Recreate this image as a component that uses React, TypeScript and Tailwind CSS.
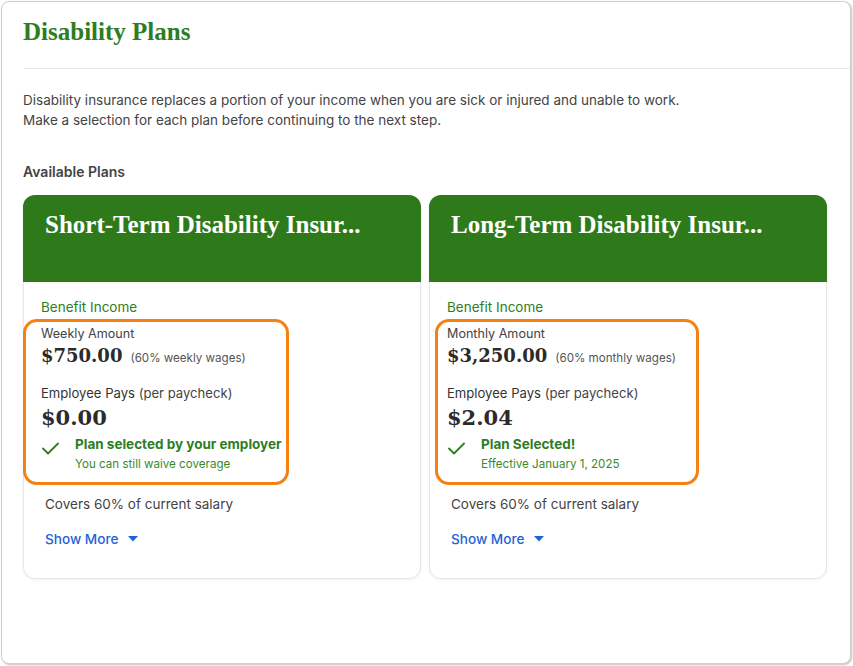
import React from 'react';

type Plan = {
  title: string;
  amountLabel: string;
  amount: string;
  wages: string;
  pays: string;
  status: string;
  note: string;
  boxClass: string;
};

const plans: Plan[] = [
  {
    title: 'Short-Term Disability Insur...',
    amountLabel: 'Weekly Amount',
    amount: '$750.00',
    wages: '(60% weekly wages)',
    pays: '$0.00',
    status: 'Plan selected by your employer',
    note: 'You can still waive coverage',
    boxClass: 'ml-[-1px] w-[266px] pl-[15px]',
  },
  {
    title: 'Long-Term Disability Insur...',
    amountLabel: 'Monthly Amount',
    amount: '$3,250.00',
    wages: '(60% monthly wages)',
    pays: '$2.04',
    status: 'Plan Selected!',
    note: 'Effective January 1, 2025',
    boxClass: 'ml-[5px] w-[264px] pl-[9px]',
  },
];

const serif = "font-['Liberation_Serif',serif]";
const money = "font-['DejaVu_Serif',serif]";

const Check = () => (
  <svg width="17" height="13" viewBox="0 0 17 13" fill="none" className="shrink-0 mt-[7px]">
    <path d="M1 6.5 L6 11.5 L16 1.5" stroke="#2e7d1f" strokeWidth="1.8" strokeLinecap="round" strokeLinejoin="round" />
  </svg>
);

const PlanCard: React.FC<{ plan: Plan }> = ({ plan }) => (
  <div className="w-[398px] h-[384px] rounded-xl border border-[#e6e6e6] shadow-[0_1px_3px_rgba(0,0,0,0.06)] bg-white flex flex-col">
    <div className="h-[87px] bg-[#2e7a1b] rounded-t-xl -mx-px -mt-px px-[22px] pt-[14px]">
      <h2 className={`${serif} text-[25px] leading-[32px] font-bold text-white whitespace-nowrap`}>
        {plan.title}
      </h2>
    </div>
    <div className="pt-[15px] pl-[17px] text-[13.5px] leading-[20px] text-[#2e7d1f]">Benefit Income</div>
    <div className={`${plan.boxClass} mt-[2px] border-[3px] border-[#f58113] rounded-[14px] pt-[3px] pb-[9px]`}>
      <div className="text-[12.6px] leading-[18px] text-[#444]">{plan.amountLabel}</div>
      <div className="flex items-baseline gap-[8px] h-[26px]">
        <span className={`${money} text-[18px] leading-[26px] font-bold text-[#2b2b2b]`}>{plan.amount}</span>
        <span className="text-[11.6px] text-[#555]">{plan.wages}</span>
      </div>
      <div className="mt-[14px] text-[13.1px] leading-[20px] text-[#333]">
        Employee Pays <span className="text-[#444]">(per paycheck)</span>
      </div>
      <div className={`${money} text-[21px] leading-[28px] mt-[1px] font-bold text-[#2b2b2b]`}>{plan.pays}</div>
      <div className="flex gap-[16px] pl-[1px] mt-[3px]">
        <Check />
        <div>
          <div className="text-[13.5px] leading-[18px] font-bold text-[#2e7d1f]">{plan.status}</div>
          <div className="mt-[2px] text-[11.6px] leading-[18px] text-[#3a8a2a]">{plan.note}</div>
        </div>
      </div>
    </div>
    <div className="pl-[21px] mt-[9px] text-[13.5px] leading-[20px] text-[#444]">Covers 60% of current salary</div>
    <div className="pl-[21px] mt-[15px] flex items-center gap-[10px] text-[13.6px] leading-[20px] font-medium text-[#1e63d6]">
      Show More
      <svg width="10" height="6" viewBox="0 0 10 6">
        <path d="M0 0 H10 L5 5.5 Z" fill="#1e63d6" />
      </svg>
    </div>
  </div>
);

export default function App() {
  return (
    <div className="w-[853px] h-[666px] bg-white font-['Inter',sans-serif] pt-px pl-px">
      <div className="w-[850px] h-[663px] border border-[#cfcfcf] rounded-lg shadow-[1px_1px_2px_rgba(0,0,0,0.25)] bg-white">
        <div className="pl-[21px] pt-[14px] pb-[20px]">
          <h1 className={`${serif} text-[25px] leading-[32px] font-bold text-[#2e7d1f]`}>Disability Plans</h1>
        </div>
        <div className="ml-[22px] border-b border-[#e8e8e8]" />
        <div className="px-[21px] pt-[21px]">
          <p className="text-[13.5px] leading-[20px] text-[#444]">
            Disability insurance replaces a portion of your income when you are sick or injured and unable to work.
            <br />
            Make a selection for each plan before continuing to the next step.
          </p>
          <div className="mt-[32px] text-[14px] leading-[20px] font-semibold text-[#444]">Available Plans</div>
          <div className="mt-[13px] flex gap-[8px]">
            {plans.map((p) => (
              <PlanCard key={p.title} plan={p} />
            ))}
          </div>
        </div>
      </div>
    </div>
  );
}
